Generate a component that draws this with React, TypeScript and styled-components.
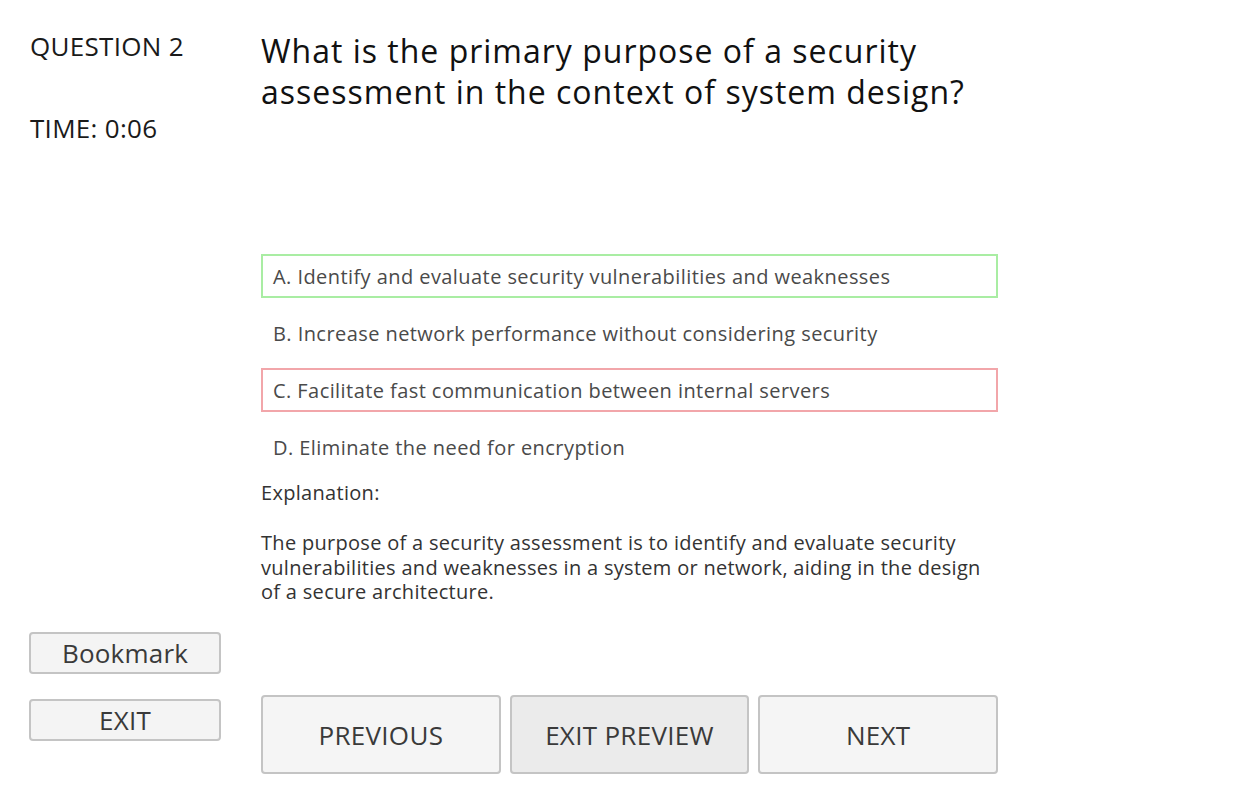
import React from "react";
import styled, { createGlobalStyle } from "styled-components";

const Global = createGlobalStyle`
  html, body { margin: 0; padding: 0; background: #ffffff; }
  body { font-family: "Open Sans", "DejaVu Sans", sans-serif; }
  * { box-sizing: border-box; }
`;

const Page = styled.div`
  display: flex;
  height: 787px;
  width: 1249px;
`;

const Side = styled.div`
  width: 233px;
  padding: 30px 0 46px 29px;
  display: flex;
  flex-direction: column;
`;

const SideLabel = styled.div<{ $mt?: number }>`
  font-size: 26px;
  letter-spacing: 0.3px;
  line-height: 32px;
  color: #1a1a1a;
  margin-top: ${(p) => p.$mt ?? 0}px;
  padding-left: 1px;
`;

const SideButtons = styled.div`
  margin-top: auto;
  display: flex;
  flex-direction: column;
  gap: 25px;
`;

const SideButton = styled.button`
  width: 192px;
  height: 42px;
  border: 2px solid #c4c4c4;
  border-radius: 4px;
  background: #f4f4f4;
  color: #3a3a3a;
  font-family: inherit;
  font-size: 26px;
  letter-spacing: 0.2px;
  line-height: 1;
  padding: 0;
  display: flex;
  align-items: center;
  justify-content: center;
`;

const Main = styled.div`
  width: 737px;
  margin-left: 28px;
  padding: 30px 0 13px 0;
  display: flex;
  flex-direction: column;
`;

const Heading = styled.h1`
  margin: 0;
  font-weight: 400;
  font-size: 32px;
  letter-spacing: 1px;
  line-height: 41px;
  color: #111;
  width: 737px;
`;

const Options = styled.div`
  margin-top: 142px;
  display: flex;
  flex-direction: column;
  gap: 13px;
`;

const Option = styled.div<{ $state?: "correct" | "wrong" }>`
  height: 44px;
  border: 2px solid
    ${(p) =>
      p.$state === "correct" ? "#a9eda3" : p.$state === "wrong" ? "#f2a6aa" : "transparent"};
  padding: 0 10px;
  display: flex;
  align-items: center;
  font-size: 20px;
  letter-spacing: 0.43px;
  color: #4a4a4a;
`;

const ExplTitle = styled.div`
  margin-top: 12px;
  font-size: 20px;
  letter-spacing: 0.3px;
  color: #333;
  line-height: 24px;
`;

const ExplText = styled.p`
  margin: 26px 0 0 0;
  font-size: 20px;
  letter-spacing: 0.3px;
  line-height: 24.5px;
  color: #333;
  width: 725px;
`;

const Nav = styled.div`
  margin-top: auto;
  display: flex;
  gap: 9px;
`;

const NavButton = styled.button<{ $dark?: boolean }>`
  width: 240px;
  height: 79px;
  border: 2px solid #c4c4c4;
  border-radius: 4px;
  background: ${(p) => (p.$dark ? "#ebebeb" : "#f5f5f5")};
  color: #3a3a3a;
  font-family: inherit;
  font-size: 26px;
  letter-spacing: 0.3px;
  padding: 0;
  display: flex;
  align-items: center;
  justify-content: center;
`;

export default function App() {
  return (
    <>
      <Global />
      <Page>
        <Side>
          <SideLabel>QUESTION 2</SideLabel>
          <SideLabel $mt={50}>TIME: 0:06</SideLabel>
          <SideButtons>
            <SideButton>Bookmark</SideButton>
            <SideButton>EXIT</SideButton>
          </SideButtons>
        </Side>
        <Main>
          <Heading>
            What is the primary purpose of a security assessment in the context of system design?
          </Heading>
          <Options>
            <Option $state="correct">A. Identify and evaluate security vulnerabilities and weaknesses</Option>
            <Option>B. Increase network performance without considering security</Option>
            <Option $state="wrong">C. Facilitate fast communication between internal servers</Option>
            <Option>D. Eliminate the need for encryption</Option>
          </Options>
          <ExplTitle>Explanation:</ExplTitle>
          <ExplText>
            The purpose of a security assessment is to identify and evaluate security vulnerabilities and
            weaknesses in a system or network, aiding in the design of a secure architecture.
          </ExplText>
          <Nav>
            <NavButton>PREVIOUS</NavButton>
            <NavButton $dark>EXIT PREVIEW</NavButton>
            <NavButton>NEXT</NavButton>
          </Nav>
        </Main>
      </Page>
    </>
  );
}
